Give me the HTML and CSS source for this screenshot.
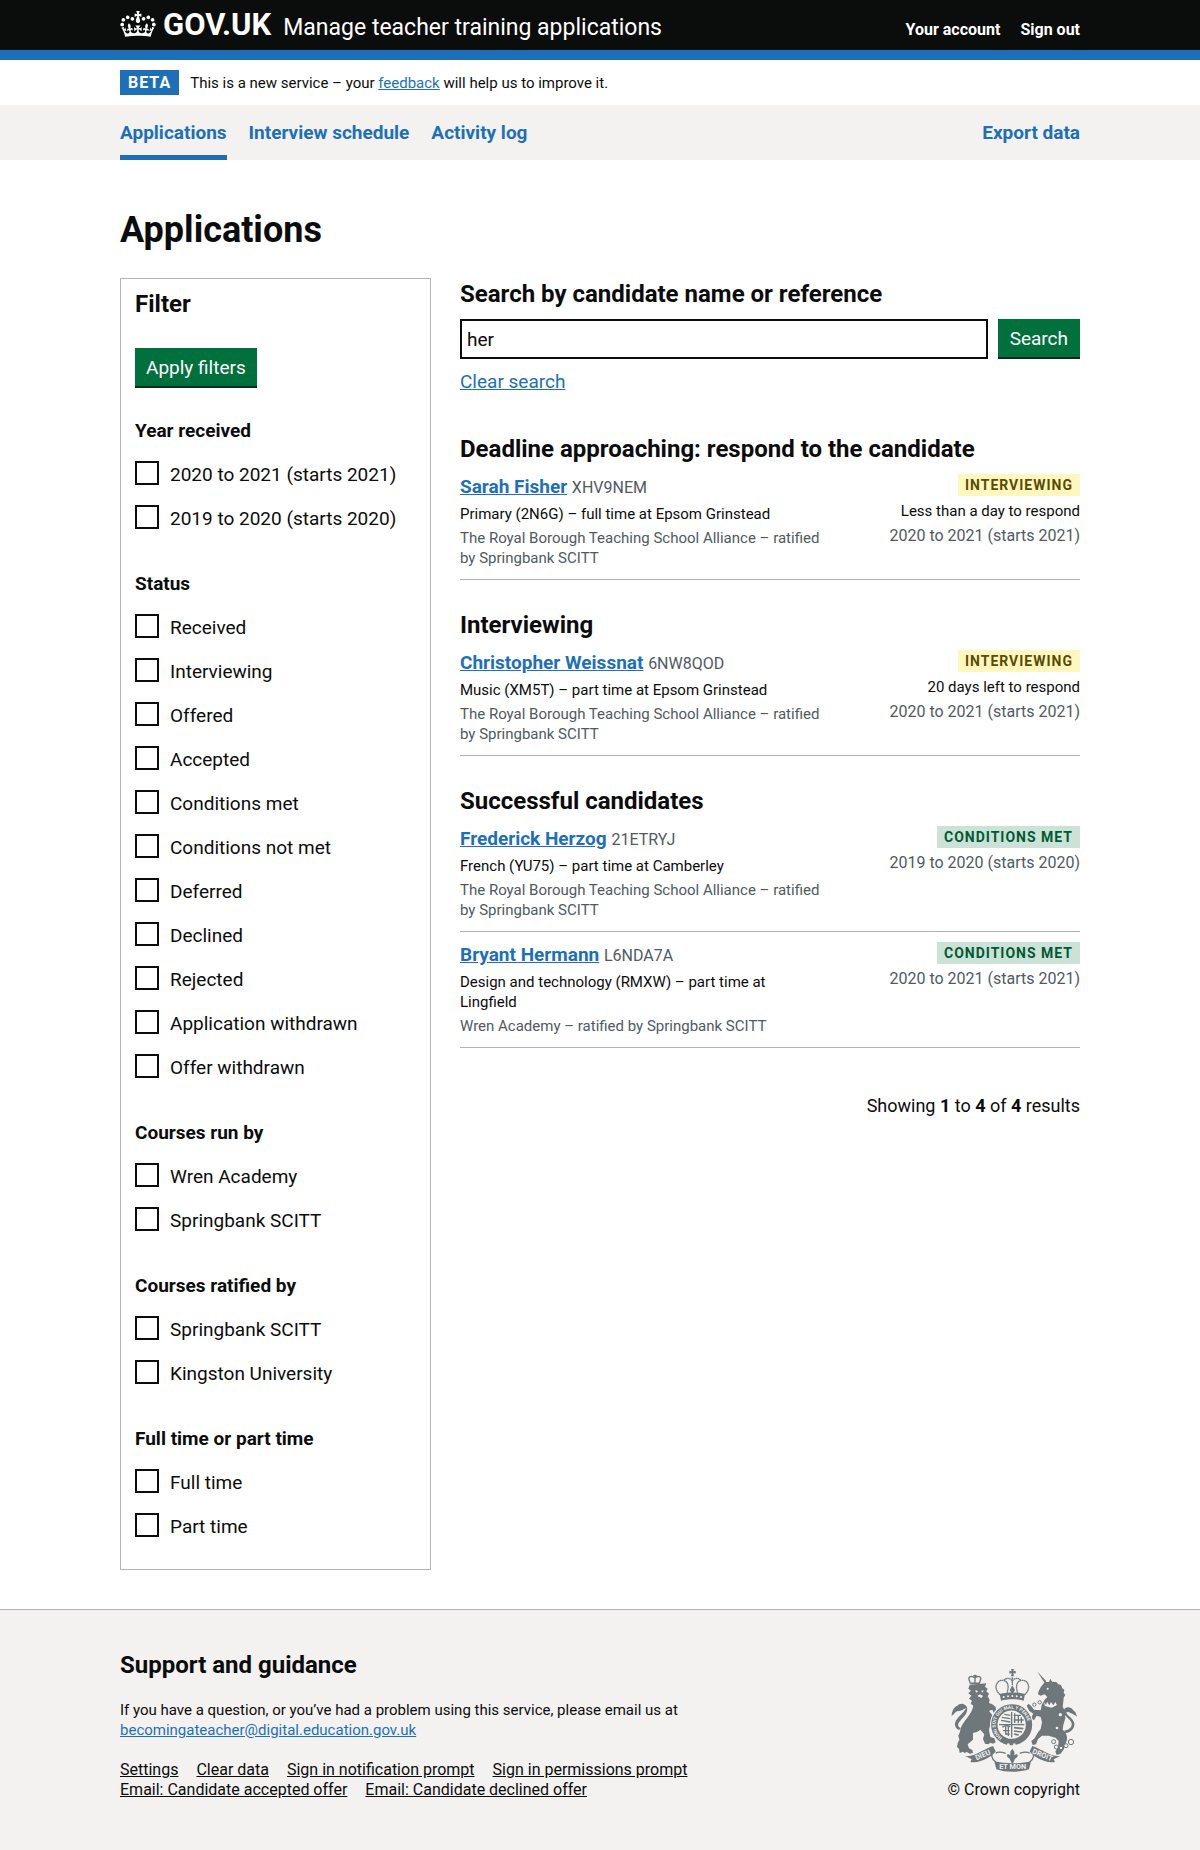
FILE: index.html
```html
<!DOCTYPE html>
<html lang="en">
<head>
<meta charset="utf-8">
<meta name="viewport" content="width=device-width, initial-scale=1">
<title>Applications – Manage teacher training applications – GOV.UK</title>
<link rel="stylesheet" href="styles.css">
</head>
<body>
<header class="header">
  <div class="container header-row">
    <a class="logo" href="#">
      <svg class="crown" viewBox="0 0 132 97" width="36" height="26" aria-hidden="true"><path fill="currentColor" fill-rule="evenodd" d="M25 30.2c3.5 1.5 7.7-.2 9.1-3.7 1.5-3.6-.2-7.8-3.9-9.2-3.6-1.4-7.6.3-9.1 3.9-1.4 3.5.3 7.5 3.9 9zM9 39.5c3.6 1.5 7.8-.2 9.2-3.7 1.5-3.6-.2-7.8-3.9-9.1-3.6-1.5-7.6.2-9.1 3.8-1.4 3.5.3 7.5 3.8 9zM4.4 57.2c3.5 1.5 7.7-.2 9.1-3.8 1.5-3.6-.2-7.7-3.9-9.1-3.5-1.5-7.6.3-9.1 3.8-1.4 3.5.3 7.6 3.9 9.1zm38.3-21.4c3.5 1.5 7.7-.2 9.1-3.8 1.5-3.6-.2-7.7-3.9-9.1-3.6-1.5-7.6.3-9.1 3.8-1.3 3.6.4 7.7 3.9 9.1zm64.4-5.6c-3.6 1.5-7.8-.2-9.1-3.7-1.5-3.6.2-7.8 3.8-9.2 3.6-1.4 7.7.3 9.2 3.9 1.3 3.5-.4 7.5-3.9 9zm15.9 9.3c-3.6 1.5-7.7-.2-9.1-3.7-1.5-3.6.2-7.8 3.7-9.1 3.6-1.5 7.7.2 9.2 3.8 1.5 3.5-.3 7.5-3.8 9zm4.7 17.7c-3.6 1.5-7.8-.2-9.2-3.8-1.5-3.6.2-7.7 3.9-9.1 3.6-1.5 7.7.3 9.2 3.8 1.3 3.5-.4 7.6-3.9 9.1zM89.3 35.8c-3.6 1.5-7.8-.2-9.2-3.8-1.4-3.6.2-7.7 3.9-9.1 3.6-1.5 7.7.3 9.2 3.8 1.4 3.6-.3 7.7-3.9 9.1zM69.7 17.7l8.9 4.7V9.3l-8.9 2.8c-.2-.3-.5-.6-.9-.9L72.4 0H59.6l3.5 11.2c-.3.3-.6.5-.9.9l-8.8-2.8v13.1l8.8-4.7c.3.3.6.7.9.9l-5 15.4v.1c-.2.8-.4 1.6-.4 2.4 0 4.1 3.1 7.5 7 8.1h.2c.3 0 .7.1 1 .1.4 0 .7 0 1-.1h.2c4-.6 7.1-4.1 7.1-8.1 0-.8-.1-1.7-.4-2.4V34l-5.1-15.4c.4-.2.7-.6 1-.9zM66 92.8c16.9 0 32.8 1.1 47.1 3.2 4-16.9 8.9-26.7 14-33.5l-9.6-3.4c1 4.9 1.1 7.2 0 10.2-1.5-1.4-3-4.3-4.2-8.7L108.6 76c2.8-2 5-3.2 7.5-3.3-4.4 9.4-10 11.9-13.6 11.2-4.3-.8-6.3-4.6-5.6-7.9 1-4.7 5.7-5.9 8-.5 4.3-8.7-3-11.4-7.6-8.8 7.1-7.2 7.9-13.5 2.1-21.1-8 6.1-8.1 12.3-4.5 20.8-4.7-5.4-12.1-2.5-9.5 6.2 3.4-5.2 7.9-2 7.2 3.1-.6 4.3-6.4 7.8-13.5 7.2-10.3-.9-10.9-8-11.2-13.8 2.5-.5 7.1 1.8 11 7.3L80.2 60c-4.1 4.4-8 5.3-12.3 5.4 1.4-4.4 8-11.6 8-11.6H55.5s6.4 7.2 7.9 11.6c-4.2-.1-8-1-12.3-5.4l1.4 16.4c3.9-5.5 8.5-7.7 10.9-7.3-.3 5.8-.9 12.8-11.1 13.8-7.2.6-12.9-2.9-13.5-7.2-.7-5 3.8-8.3 7.1-3.1 2.7-8.7-4.6-11.6-9.4-6.2 3.7-8.5 3.6-14.7-4.6-20.8-5.8 7.6-5 13.9 2.2 21.1-4.7-2.6-11.9.1-7.7 8.8 2.3-5.5 7.1-4.2 8.1.5.7 3.3-1.3 7.1-5.7 7.9-3.5.7-9-1.8-13.5-11.2 2.5.1 4.7 1.3 7.5 3.3l-4.7-15.4c-1.2 4.4-2.7 7.2-4.3 8.7-1.1-3-.9-5.3 0-10.2l-9.5 3.4c5 6.9 9.9 16.7 14 33.5 14.8-2.1 30.8-3.2 47.7-3.2z"/></svg>
      <span class="logo-text">GOV.UK</span>
    </a>
    <a class="service-name" href="#">Manage teacher training applications</a>
    <nav class="account" aria-label="Account">
      <a href="#">Your account</a>
      <a href="#">Sign out</a>
    </nav>
  </div>
</header>

<div class="container phase">
  <strong class="phase-tag">BETA</strong>
  <span class="phase-text">This is a new service – your <a class="link" href="#">feedback</a> will help us to improve it.</span>
</div>

<nav class="primary" aria-label="Primary">
  <div class="container primary-row">
    <a class="current" href="#" aria-current="page">Applications</a>
    <a href="#">Interview schedule</a>
    <a href="#">Activity log</a>
    <a class="export" href="#">Export data</a>
  </div>
</nav>

<main class="container main">
  <h1 class="title">Applications</h1>
  <div class="columns">
    <form class="filter">
      <h2 class="heading">Filter</h2>
      <button class="button apply" type="button">Apply filters</button>
      <fieldset class="group">
        <legend>Year received</legend>
        <label class="option"><input type="checkbox">2020 to 2021 (starts 2021)</label>
        <label class="option"><input type="checkbox">2019 to 2020 (starts 2020)</label>
      </fieldset>
      <fieldset class="group">
        <legend>Status</legend>
        <label class="option"><input type="checkbox">Received</label>
        <label class="option"><input type="checkbox">Interviewing</label>
        <label class="option"><input type="checkbox">Offered</label>
        <label class="option"><input type="checkbox">Accepted</label>
        <label class="option"><input type="checkbox">Conditions met</label>
        <label class="option"><input type="checkbox">Conditions not met</label>
        <label class="option"><input type="checkbox">Deferred</label>
        <label class="option"><input type="checkbox">Declined</label>
        <label class="option"><input type="checkbox">Rejected</label>
        <label class="option"><input type="checkbox">Application withdrawn</label>
        <label class="option"><input type="checkbox">Offer withdrawn</label>
      </fieldset>
      <fieldset class="group">
        <legend>Courses run by</legend>
        <label class="option"><input type="checkbox">Wren Academy</label>
        <label class="option"><input type="checkbox">Springbank SCITT</label>
      </fieldset>
      <fieldset class="group">
        <legend>Courses ratified by</legend>
        <label class="option"><input type="checkbox">Springbank SCITT</label>
        <label class="option"><input type="checkbox">Kingston University</label>
      </fieldset>
      <fieldset class="group">
        <legend>Full time or part time</legend>
        <label class="option"><input type="checkbox">Full time</label>
        <label class="option"><input type="checkbox">Part time</label>
      </fieldset>
    </form>

    <div class="results">
      <form class="search">
        <label class="heading" for="search">Search by candidate name or reference</label>
        <div class="search-row">
          <input class="search-input" id="search" type="text" value="her">
          <button class="button search-button" type="button">Search</button>
        </div>
        <a class="link clear" href="#">Clear search</a>
      </form>

      <section class="section">
        <h2 class="heading">Deadline approaching: respond to the candidate</h2>
        <article class="card">
          <div class="card-main">
            <h3 class="name"><a class="link" href="#">Sarah Fisher</a> <span class="ref">XHV9NEM</span></h3>
            <p>Primary (2N6G) – full time at Epsom Grinstead</p>
            <p class="muted">The Royal Borough Teaching School Alliance – ratified by Springbank SCITT</p>
          </div>
          <div class="card-side">
            <strong class="tag yellow">INTERVIEWING</strong>
            <p>Less than a day to respond</p>
            <p class="muted year">2020 to 2021 (starts 2021)</p>
          </div>
        </article>
      </section>

      <section class="section">
        <h2 class="heading">Interviewing</h2>
        <article class="card">
          <div class="card-main">
            <h3 class="name"><a class="link" href="#">Christopher Weissnat</a> <span class="ref">6NW8QOD</span></h3>
            <p>Music (XM5T) – part time at Epsom Grinstead</p>
            <p class="muted">The Royal Borough Teaching School Alliance – ratified by Springbank SCITT</p>
          </div>
          <div class="card-side">
            <strong class="tag yellow">INTERVIEWING</strong>
            <p>20 days left to respond</p>
            <p class="muted year">2020 to 2021 (starts 2021)</p>
          </div>
        </article>
      </section>

      <section class="section">
        <h2 class="heading">Successful candidates</h2>
        <article class="card">
          <div class="card-main">
            <h3 class="name"><a class="link" href="#">Frederick Herzog</a> <span class="ref">21ETRYJ</span></h3>
            <p>French (YU75) – part time at Camberley</p>
            <p class="muted">The Royal Borough Teaching School Alliance – ratified by Springbank SCITT</p>
          </div>
          <div class="card-side">
            <strong class="tag green">CONDITIONS MET</strong>
            <p class="muted year">2019 to 2020 (starts 2020)</p>
          </div>
        </article>
        <article class="card">
          <div class="card-main">
            <h3 class="name"><a class="link" href="#">Bryant Hermann</a> <span class="ref">L6NDA7A</span></h3>
            <p>Design and technology (RMXW) – part time at Lingfield</p>
            <p class="muted">Wren Academy – ratified by Springbank SCITT</p>
          </div>
          <div class="card-side">
            <strong class="tag green">CONDITIONS MET</strong>
            <p class="muted year">2020 to 2021 (starts 2021)</p>
          </div>
        </article>
      </section>

      <p class="count">Showing <b>1</b> to <b>4</b> of <b>4</b> results</p>
    </div>
  </div>
</main>

<footer class="footer">
  <div class="container footer-row">
    <div class="support">
      <h2 class="heading">Support and guidance</h2>
      <p>If you have a question, or you’ve had a problem using this service, please email us at <a class="link" href="#">becomingateacher@digital.education.gov.uk</a></p>
      <ul class="footer-links">
        <li><a href="#">Settings</a></li>
        <li><a href="#">Clear data</a></li>
        <li><a href="#">Sign in notification prompt</a></li>
        <li><a href="#">Sign in permissions prompt</a></li>
        <li><a href="#">Email: Candidate accepted offer</a></li>
        <li><a href="#">Email: Candidate declined offer</a></li>
      </ul>
    </div>
    <a class="copyright" href="#">
      <svg viewBox="34 50 378 312" width="126" height="104" aria-hidden="true">
        <g fill="#6f777b">
          <!-- lion -->
          <path d="M90 100l-4 12 8 6-8 8 9 7-7 9 9 6-4 9 8 6c-3 14-8 22-15 32-10 14-23 28-25 46l-5 12 3 12-5 10-2 12 6 6 2 12 10-4 4 4 8-3 8 5 10-2-2-9-10-5-4-12 16-14 0-20c8-2 16-4 22-10l12 14-4 14 6 14 10 2 6-5 8 3 8-4-4-12-12-4-4-20c2-16 10-24 12-44l-12-14 10-4 4 10 8-2-2-16-10-8-10-4 2-10-6-10 4-8-8-7 4-8-8-6 4-10z"/>
          <path d="M58 236c-12-6-16-18-8-30 8-12 22-22 30-36-8 4-18 10-28 10-6 4-10 10-16 14 0-14 6-26 16-30 8-10 24-10 30 4 4 18-10 28-20 40-8 8-10 18 2 22z"/>
          <!-- unicorn -->
          <path d="M292 60l28 30-5 5z"/>
          <path d="M316 92l12 0 4-10 5 9 13 1 6 7 8 2 4 10 6 4-2 9 5 7-5 8-1 12-2 14 6 14 2 22-6 20-2 14c10 8 16 20 12 34l-6 12-2 12-10 14-12 4-4-10 8-14 2-18-10-10-20-6-20 0-12 10-6 16-10 2-4-12 10-8 10-18 8-10 4-20-4-16-12-4-8 14-10-6 8-14-12-8-8-16 6-6 10 10 6 8 20 2 3-16 9-16 8-8-8-8-12 4-8-4 2-10 8-14z"/>
          <path d="M374 238c20-2 28-18 18-30-10-12-22-18-20-30 4-14 22-12 28-2 6 4 10 10 12 20-6-4-12-8-18-10-6-4-12-6-14-2 4 10 22 18 24 32 2 16-12 30-30 30z"/>
          <!-- motto scroll -->
          <path d="M76 314c28 4 54-20 84-30l8 16c-8 14-46 38-76 32l4-8z"/>
          <path d="M362 314c-28 4-54-20-84-30l-8 16c8 14 46 38 76 32l-4-8z"/>
          <path d="M164 330c30 8 80 8 110 0l-6 24c-28 10-70 10-98 0z"/>
          <path d="M218 292l6 9v11c8-8 14 0 8 6l-6 4-4 10-4 6-4-6-4-10-6-4c-6-6 0-14 8-6v-11z"/>
          <!-- crown band and cross -->
          <path d="M214 53h9l-2 7 7-2v9l-7-2 2 10h-9l2-10-7 2v-9l7 2z"/>
          <path d="M180 128c24-6 52-6 76 0l-4 20c-22-6-46-6-68 0z"/>
        </g>
        <g fill="none" stroke="#6f777b" stroke-width="4">
          <!-- lion crown -->
          <path d="M92 97l-4-13c-3-8 8-12 18-4 8-8 20-4 17 4l-4 13M106 97V70M101 73h10"/>
          <path d="M92 96h28" stroke-width="5"/>
          <!-- crown arches -->
          <path d="M181 130c-22-20-10-44 8-43 17 2 20 18 12 41M255 130c22-20 10-44-8-43-17 2-20 18-12 41M192 87c10-9 20-7 26 2 6-9 16-11 26-2M218 78v24" stroke-dasharray="5 1"/>
          <path d="M218 102l8 14-8 12-8-12z" fill="#6f777b" stroke="none"/>
          <!-- scroll folds -->
          <path d="M162 298c-10 10-6 26 6 34M276 298c10 10 6 26-6 34M168 306c8-6 18-4 30 0M270 306c-8-6-18-4-30 0"/>
          <!-- chain -->
          <g stroke-width="3" fill="#f3f2f1">
            <circle cx="300" cy="153" r="5"/><circle cx="284" cy="160" r="5"/><circle cx="342" cy="271" r="6"/><circle cx="350" cy="287" r="6"/><circle cx="379" cy="283" r="6"/><circle cx="394" cy="272" r="8"/><circle cx="364" cy="290" r="5"/>
          </g>
        </g>
        <circle cx="216" cy="220" r="65" fill="#f3f2f1"/>
        <circle cx="216" cy="220" r="52" fill="none" stroke="#6f777b" stroke-width="19"/>
        <path id="garter" d="M188 259a48 48 0 1 1 56 0" fill="none"/>
        <text class="garter"><textPath href="#garter">HONI SOIT QUI MAL Y PENSE</textPath></text>
        <g fill="none" stroke="#6f777b" stroke-width="3">
          <path d="M216 182v76M178 220h76" stroke-width="4"/>
          <path d="M186 198l26 4M184 207l28 5M194 189l18 3M225 186v29M236 190v26M245 198v18M222 192h22M222 206h30M188 228c6-6 14-6 24-2M190 238h20M198 248h12M198 226v24M206 224v30" stroke-width="4"/>
          <path d="M223 229l28 3M223 239l24 3M223 248l14 3" stroke-width="5"/>
        </g>
        <g fill="#f3f2f1">
          <path d="M107 116l9 4-7 4zM124 119l8-2-3 7zM113 134l8-5 9 5-5 6z"/>
          <circle cx="206" cy="280" r="4"/><circle cx="224" cy="280" r="4"/>
          <path d="M312 152l7 8 3-9 7 11 5-10 7 10 6-10 5 9-16 8-20-5z"/>
          <circle cx="324" cy="112" r="3"/><circle cx="362" cy="190" r="5"/><circle cx="352" cy="230" r="4"/>
          <circle cx="192" cy="137" r="3"/><circle cx="205" cy="135" r="3"/><circle cx="218" cy="134" r="3"/><circle cx="231" cy="135" r="3"/><circle cx="244" cy="137" r="3"/>
        </g>
        <g class="motto">
          <text x="130" y="318" transform="rotate(-22 130 312)">DIEU</text>
          <text x="219" y="354">ET MON</text>
          <text x="308" y="318" transform="rotate(22 308 312)">DROIT</text>
        </g>
      </svg>
      <span>© Crown copyright</span>
    </a>
  </div>
</footer>
</body>
</html>
```
FILE: styles.css
```css
* { box-sizing: border-box; }

body {
  margin: 0;
  background: #fff;
  color: #0b0c0c;
  font: 16px/20px Roboto, "Liberation Sans", sans-serif;
}

h1, h2, h3, p, ul, fieldset { margin: 0; padding: 0; }

p, .phase-text { font-size: 15px; }

.container {
  max-width: 960px;
  margin: 0 auto;
}

.link { color: #1d70b8; }

.heading {
  display: block;
  font-size: 24px;
  line-height: 30px;
  font-weight: 700;
}

/* Header */
.header {
  background: #0b0c0c;
  border-bottom: 10px solid #1d70b8;
}

.header-row {
  display: flex;
  align-items: baseline;
  height: 50px;
  padding-top: 8px;
}

.header a {
  color: #fff;
  text-decoration: none;
}

.logo {
  display: flex;
  gap: 7px;
  font-size: 31px;
  line-height: 34px;
  font-weight: 700;
}

.logo-text { align-self: baseline; }

.crown { margin-top: 3px; }

.service-name {
  margin-left: 12px;
  font-size: 23px;
  line-height: 30px;
}

.account {
  display: flex;
  gap: 20px;
  margin-left: auto;
  font-weight: 700;
}

.phase {
  display: flex;
  align-items: center;
  gap: 11px;
  padding: 10px 0;
}

.phase-tag {
  padding: 2px 8px;
  background: #1d70b8;
  color: #fff;
  line-height: 21px;
  letter-spacing: 1px;
}

/* Primary navigation */
.primary { background: #f3f2f1; }

.primary-row {
  display: flex;
  gap: 22px;
}

.primary a {
  padding: 15px 0 10px;
  border-bottom: 5px solid transparent;
  color: #1d70b8;
  font-size: 19px;
  line-height: 25px;
  font-weight: 700;
  text-decoration: none;
}

.primary .current { border-color: #1d70b8; }
.primary .export { margin-left: auto; }

/* Page layout */
.main { padding: 50px 0 39px; }

.title {
  margin-bottom: 28px;
  font-size: 36px;
  line-height: 40px;
}

.columns {
  display: grid;
  grid-template-columns: 311px 1fr;
  gap: 29px;
  align-items: start;
}

.button {
  height: 40px;
  padding: 0 11px 2px;
  border: 0;
  background: #00703c;
  box-shadow: inset 0 -2px 0 #002d18;
  color: #fff;
  font: 19px/25px Roboto, "Liberation Sans", sans-serif;
}

/* Filter panel */
.filter {
  display: flex;
  flex-direction: column;
  padding: 10px 14px 29px;
  border: 1px solid #b1b4b6;
}

.apply {
  align-self: flex-start;
  margin: 29px 0 31px;
}

.group {
  border: 0;
  min-width: 0;
}

.group + .group { margin-top: 40px; }

.group legend {
  margin-bottom: 18px;
  padding: 0;
  font-size: 19px;
  line-height: 24px;
  font-weight: 700;
}

.option {
  display: flex;
  gap: 11px;
  font-size: 19px;
  line-height: 27px;
}

.option + .option { margin-top: 17px; }

.option input {
  appearance: none;
  flex: none;
  width: 24px;
  height: 24px;
  margin: 0;
  border: 2px solid #0b0c0c;
  background: #fff;
}

/* Search */
.search-row {
  display: flex;
  gap: 10px;
  margin: 10px 0;
}

.search-button {
  padding-left: 12px;
  padding-right: 12px;
}

.search-input {
  flex: 1;
  min-width: 0;
  height: 40px;
  padding: 5px;
  border: 2px solid #0b0c0c;
  border-radius: 0;
  color: #0b0c0c;
  font: 19px/25px Roboto, "Liberation Sans", sans-serif;
}

.clear {
  font-size: 19px;
  line-height: 25px;
}

/* Results */
.results { padding-top: 1px; }

.section { margin-top: 30px; }
.search + .section { margin-top: 40px; }

.card {
  display: flex;
  justify-content: space-between;
  gap: 20px;
  padding: 10px 0 9px;
  border-bottom: 1px solid #b1b4b6;
}

.card-main, .card-side {
  display: flex;
  flex-direction: column;
}

.card-main {
  gap: 4px;
  max-width: 363px;
  padding-bottom: 2px;
}

.card-side {
  gap: 5px;
  align-items: flex-end;
  text-align: right;
}

.name {
  font-size: 19px;
  line-height: 25px;
}

.ref {
  color: #505a5f;
  font-size: 16px;
  font-weight: 400;
}

.muted { color: #505a5f; }
.year { font-size: 16px; }

.tag {
  padding: 1px 7px;
  font-size: 14px;
  letter-spacing: 1px;
}

.yellow { background: #fff7bf; color: #594d00; }
.green { background: #cce2d8; color: #005a30; }

.count {
  margin-top: 45px;
  font-size: 18px;
  line-height: 25px;
  text-align: right;
}

/* Footer */
.footer {
  padding: 40px 0 50px;
  border-top: 1px solid #b1b4b6;
  background: #f3f2f1;
}

.footer-row {
  display: flex;
  justify-content: space-between;
  align-items: flex-end;
}

.support {
  display: flex;
  flex-direction: column;
  gap: 20px;
  width: 60%;
}

.footer-links {
  display: flex;
  flex-wrap: wrap;
  column-gap: 18px;
  list-style: none;
}

.footer-links a, .copyright { color: #0b0c0c; }

.copyright {
  display: flex;
  flex-direction: column;
  align-items: center;
  gap: 8px;
  text-decoration: none;
}

.garter {
  fill: #f3f2f1;
  font-size: 14px;
  font-weight: 700;
}

.motto {
  fill: #f3f2f1;
  font-size: 22px;
  font-weight: 700;
  text-anchor: middle;
}
```
